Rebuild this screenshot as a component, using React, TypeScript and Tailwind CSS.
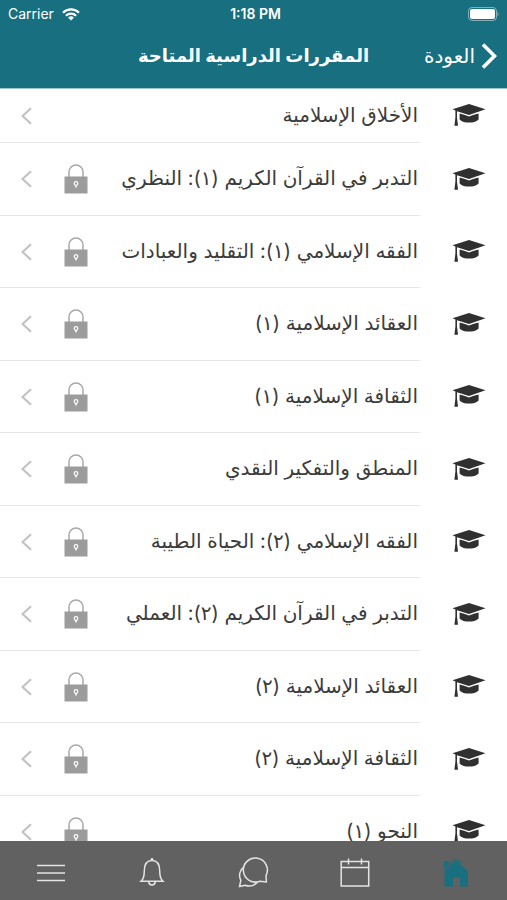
import type { ReactNode } from "react";

type Course = { title: string; locked: boolean };

const courses: Course[] = [
  { title: "الأخلاق الإسلامية", locked: false },
  { title: "التدبر في القرآن الكريم (١): النظري", locked: true },
  { title: "الفقه الإسلامي (١): التقليد والعبادات", locked: true },
  { title: "العقائد الإسلامية (١)", locked: true },
  { title: "الثقافة الإسلامية (١)", locked: true },
  { title: "المنطق والتفكير النقدي", locked: true },
  { title: "الفقه الإسلامي (٢): الحياة الطيبة", locked: true },
  { title: "التدبر في القرآن الكريم (٢): العملي", locked: true },
  { title: "العقائد الإسلامية (٢)", locked: true },
  { title: "الثقافة الإسلامية (٢)", locked: true },
  { title: "النحو (١)", locked: true },
];

function CapIcon() {
  return (
    <svg width="34" height="24" viewBox="0 0 34 24" fill="#303030" aria-hidden="true">
      <path d="M17 1 L33.5 6.3 L17 12 L5 8.2 L5 14.5 L6 22.7 L2.4 22.7 L3.4 14.5 L3.4 7.5 L.5 6.3 Z" />
      <path d="M7.6 10.4 Q12 11.6 17 13.4 Q22 11.6 26.6 10.4 V16.4 Q23 19.6 17 19.6 Q11 19.6 7.6 16.4 Z" />
    </svg>
  );
}

function LockIcon() {
  return (
    <svg width="24" height="30" viewBox="0 0 24 30" aria-hidden="true">
      <path d="M5 13 V8 A7 7 0 0 1 19 8 V13" fill="none" stroke="#a8a8a8" strokeWidth="1.5" />
      <rect x=".5" y="12.5" width="23" height="17" fill="#9c9c9c" />
      <circle cx="12" cy="19.5" r="1.8" fill="none" stroke="#fff" strokeWidth="1.2" />
      <path d="M12 21 V23.6" stroke="#fff" strokeWidth="1.5" />
    </svg>
  );
}

function Disclosure() {
  return (
    <svg width="12" height="18" viewBox="0 0 12 18" fill="none" stroke="#c2c2c2" strokeWidth="2.2" aria-hidden="true">
      <path d="M10 1.2 L1.5 9 L10 16.8" />
    </svg>
  );
}

function StatusBar() {
  return (
    <div dir="ltr" className="grid h-7 grid-cols-[1fr_auto_1fr] items-center px-2 text-[14px] leading-4">
      <div className="flex items-center gap-2">
        <span>Carrier</span>
        <svg width="18" height="13" viewBox="0 0 18 13" fill="none" stroke="#fff" strokeWidth="2.1" aria-hidden="true">
          <path d="M1 4.7 A11.3 11.3 0 0 1 17 4.7" />
          <path d="M3.9 7.7 A7.2 7.2 0 0 1 14.1 7.7" />
          <path d="M6.1 9.7 A4.2 4.2 0 0 1 11.9 9.7 L9 12.6 Z" fill="#fff" stroke="none" />
        </svg>
      </div>
      <span className="pl-1 font-semibold">1:18 PM</span>
      <div className="flex justify-end">
        <svg width="32" height="14" viewBox="0 0 32 14" aria-hidden="true">
          <rect x="1.5" y=".5" width="28" height="13" rx="3.5" fill="none" stroke="#fff" strokeOpacity=".45" />
          <rect x="3" y="2" width="25" height="10" rx="2" fill="#fff" />
          <path d="M30.5 4.6 Q32.5 7 30.5 9.4 Z" fill="#fff" fillOpacity=".5" />
        </svg>
      </div>
    </div>
  );
}

function CourseRow({ title, locked }: Course) {
  return (
    <li className="flex h-[72px] shrink-0 first:h-[54px] even:h-[73px]">
      <div className="flex w-[87px] shrink-0 items-center pb-0.5 pr-[21px]">
        <CapIcon />
      </div>
      <a href="#course" className="flex min-w-0 flex-1 items-center border-b border-[#e6e6e6] pr-0.5">
        <span className="flex-1 whitespace-nowrap pb-0.5 text-[20px] leading-7">{title}</span>
        {locked && <LockIcon />}
        <span className="ml-[21px] mr-[31px]">
          <Disclosure />
        </span>
      </a>
    </li>
  );
}

function Tab({ label, children }: { label: string; children: ReactNode }) {
  return (
    <button type="button" aria-label={label} className="flex flex-1 items-center justify-center pt-1">
      <svg width="32" height="32" viewBox="0 0 32 32" fill="none" stroke="#e4e4e4" strokeWidth="1.5" aria-hidden="true">
        {children}
      </svg>
    </button>
  );
}

export default function App() {
  return (
    <div
      dir="rtl"
      className="flex h-screen flex-col overflow-hidden bg-white font-['Inter','DejaVu_Sans',sans-serif] text-[#3c3c3c]"
    >
      <header className="h-[89px] shrink-0 border-b border-[#9fc4cb] bg-[#186f80] text-white">
        <StatusBar />
        <div className="grid h-14 grid-cols-[1fr_auto_1fr] items-center px-2.5">
          <button type="button" className="flex items-center gap-1.5 text-[20px] leading-7">
            <svg width="16" height="28" viewBox="0 0 16 28" fill="none" stroke="#fff" strokeWidth="3.6" aria-hidden="true">
              <path d="M2 2.5 L13.5 14 L2 25.5" />
            </svg>
            العودة
          </button>
          <h1 className="text-[18px] font-bold leading-7">المقررات الدراسية المتاحة</h1>
        </div>
      </header>

      <main className="min-h-0 flex-1 overflow-hidden">
        <ul className="flex flex-col">
          {courses.map((course) => (
            <CourseRow key={course.title} {...course} />
          ))}
        </ul>
      </main>

      <nav className="flex h-[59px] shrink-0 bg-[#616161]">
        <Tab label="الرئيسية">
          <path
            d="M4.5 29.5 V13.5 L14.5 4.8 Q16 3.6 17.5 4.8 L28 14.5 V29.5 H20 V20.5 H13 V29.5 Z"
            fill="#186f80"
            stroke="none"
          />
          <path d="M4 11.5 V5.5 L6.2 3.4 L9 5.5 V7.5 Z" fill="#186f80" stroke="none" />
          <path d="M4 11.8 L13.5 3.6 Q16 2 18.5 3.8 L21.5 6.5" stroke="#186f80" strokeWidth="1.1" />
        </Tab>
        <Tab label="التقويم">
          <rect x="2.2" y="4.5" width="27.5" height="24.5" />
          <path d="M2.2 10.5 H29.7 M9.5 1.5 V7.5 M22.5 1.5 V7.5" />
        </Tab>
        <Tab label="المحادثات">
          <path d="M29 18.6 A12 12 0 1 0 22.8 24.2 L29.4 25 Z" />
          <path d="M7 9.8 A10.5 10.5 0 0 0 3.8 23.2 L2.6 29.4 L8 28.2 Q15.5 31 20.5 25" />
        </Tab>
        <Tab label="الإشعارات">
          <path d="M5 24.3 Q8.3 21.5 8.3 14 Q8.3 3.5 16 3.5 Q23.7 3.5 23.7 14 Q23.7 21.5 27 24.3 Z" />
          <path d="M12.8 24.8 A3.2 3.2 0 0 0 19.2 24.8" />
          <circle cx="16" cy="2.5" r="1.4" fill="#e4e4e4" stroke="none" />
        </Tab>
        <Tab label="القائمة">
          <path d="M2 8.5 H30 M2 16 H30 M2 23.5 H30" />
        </Tab>
      </nav>
    </div>
  );
}
